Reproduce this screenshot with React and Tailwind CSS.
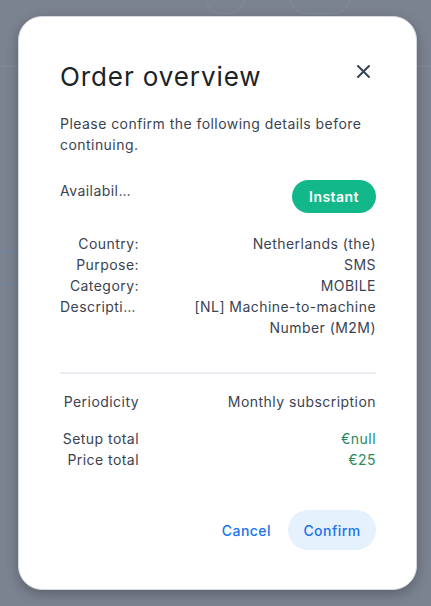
import React from 'react';

const Row = ({ label, value, valueClass = 'text-[#3b4352]', labelAlign = 'text-right' }) => (
  <div className="flex items-start">
    <div className={`w-[79px] shrink-0 truncate ${labelAlign}`}>{label}</div>
    <div className={`flex-1 text-right pl-[40px] ${valueClass}`}>{value}</div>
  </div>
);

const App = () => {
  return (
    <div
      className="relative w-[431px] h-[606px] overflow-hidden bg-[#7b8290]"
      style={{ fontFamily: 'Inter, "Noto Sans", sans-serif' }}
    >
      {/* faint page behind overlay */}
      <div className="absolute left-0 right-0 top-[66px] h-px bg-[#838a97]" />
      <div className="absolute left-0 w-[20px] top-[250px] h-[2px] bg-[#74829a]" />
      <div className="absolute left-0 w-[20px] top-[283px] h-[2px] bg-[#74829a]" />
      <div className="absolute left-[205px] top-[-20px] w-[40px] h-[34px] rounded-full border border-[#858c99]" />
      <div className="absolute left-[290px] top-[-20px] w-[60px] h-[34px] rounded-full border border-[#858c99]" />

      <div className="absolute left-[18px] top-[16px] w-[399px] h-[574px] rounded-[24px] bg-white border border-[#d5d8de] shadow-[0_4px_12px_rgba(0,0,0,0.25)] pt-[44px] pl-[41px] pr-[40px] text-[14px] leading-[21px] tracking-[0.45px] text-[#3b4352]">
        <div className="flex items-start justify-between">
          <h1 className="text-[26px] leading-[32px] font-normal text-[#1b2326] tracking-[0.9px]">Order overview</h1>
          <button className="mt-[3px] mr-[5px] text-[#3b4352]" aria-label="Close">
            <svg width="15" height="15" viewBox="0 0 15 15" fill="none" stroke="currentColor" strokeWidth="2" strokeLinecap="round">
              <path d="M2 2 L13 13 M13 2 L2 13" />
            </svg>
          </button>
        </div>

        <p className="mt-[20px]">Please confirm the following details before continuing.</p>

        <div className="mt-[23px] flex items-start justify-between">
          <div className="w-[73px] shrink-0 truncate pt-[2px]" title="Availability">Availability</div>
          <span className="mt-[2px] h-[33px] w-[84px] rounded-full bg-[#13b88a] text-white font-semibold flex items-center justify-center">
            Instant
          </span>
        </div>

        <div className="mt-[20px]">
          <Row label="Country:" value="Netherlands (the)" />
          <Row label="Purpose:" value="SMS" />
          <Row label="Category:" value="MOBILE" />
          <Row label="Description:" labelAlign="text-left" value="[NL] Machine-to-machine Number (M2M)" />
        </div>

        <div className="mt-[34px] h-[2px] bg-[#ebebf2]" />

        <div className="mt-[17px]">
          <Row label="Periodicity" value="Monthly subscription" />
        </div>

        <div className="mt-[16px]">
          <Row label="Setup total" value="€null" valueClass="text-[#2a8a5c]" />
          <Row label="Price total" value="€25" valueClass="text-[#2a8a5c]" />
        </div>

        <div className="mt-[40px] flex items-center justify-end gap-[17px]">
          <button className="text-[#1a73e8] font-medium">Cancel</button>
          <button className="h-[40px] w-[88px] rounded-full bg-[#e6f1fe] text-[#1a73e8] font-medium">Confirm</button>
        </div>
      </div>
    </div>
  );
};

export default App;
